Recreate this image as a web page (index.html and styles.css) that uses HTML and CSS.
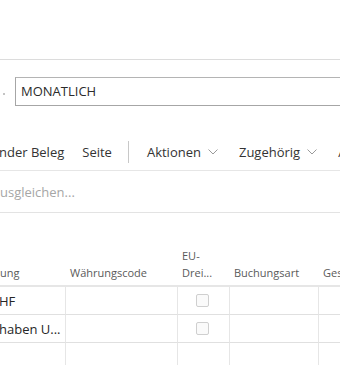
FILE: index.html
```html
<!DOCTYPE html>
<html lang="de">
<head>
<meta charset="utf-8">
<link rel="stylesheet" href="styles.css">
</head>
<body>
<div class="page">
  <div class="topbar"></div>
  <div class="field-row">
    <span class="dot"></span>
    <div class="input">MONATLICH</div>
  </div>
  <div class="toolbar">
    <span class="tb-item first">nder Beleg</span>
    <span class="tb-item">Seite</span>
    <span class="sep"></span>
    <span class="tb-item menu">Aktionen <svg class="chev" viewBox="0 0 10 6"><path d="M0.5 0.5 L5 5 L9.5 0.5" /></svg></span>
    <span class="tb-item menu">Zugehörig <svg class="chev" viewBox="0 0 10 6"><path d="M0.5 0.5 L5 5 L9.5 0.5" /></svg></span>
    <span class="tb-item">A</span>
  </div>
  <div class="search">usgleichen...</div>
  <div class="grid">
    <div class="hd c1">ung</div>
    <div class="hd c2">Währungscode</div>
    <div class="hd c3">EU-<br>Drei...</div>
    <div class="hd c4">Buchungsart</div>
    <div class="hd c5">Ges</div>

    <div class="cell c1 txt">HF</div>
    <div class="cell c2"></div>
    <div class="cell c3"><span class="cb"></span></div>
    <div class="cell c4"></div>
    <div class="cell c5"></div>

    <div class="cell c1 txt">haben U...</div>
    <div class="cell c2"></div>
    <div class="cell c3"><span class="cb"></span></div>
    <div class="cell c4"></div>
    <div class="cell c5"></div>

    <div class="cell c1"></div>
    <div class="cell c2"></div>
    <div class="cell c3"></div>
    <div class="cell c4"></div>
    <div class="cell c5"></div>
  </div>
</div>
</body>
</html>
```
FILE: styles.css
```css
html, body {
  margin: 0;
  padding: 0;
  background: #fff;
}
body {
  width: 340px;
  height: 365px;
  overflow: hidden;
  font-family: "Open Sans", "Liberation Sans", sans-serif;
  color: #212121;
}
.page {
  width: 340px;
  overflow: hidden;
}
.topbar {
  height: 59px;
  border-bottom: 1px solid #dcdcdc;
}
.field-row {
  display: flex;
  align-items: center;
  height: 29px;
  margin-top: 17px;
}
.dot {
  flex: 0 0 2px;
  width: 2px;
  height: 2px;
  background: #c4c4c4;
  margin-left: 3px;
  margin-right: 10px;
  margin-top: 5px;
}
.input {
  flex: 0 0 340px;
  box-sizing: border-box;
  height: 29px;
  border: 1px solid #a6a6a6;
  border-top-color: #b4b4b4;
  padding-left: 5px;
  font-size: 13px;
  line-height: 27px;
  color: #2b2b2b;
  white-space: nowrap;
}
.toolbar {
  display: flex;
  align-items: center;
  height: 34px;
  margin-top: 31px;
  padding-bottom: 3px;
  box-sizing: border-box;
  border-bottom: 1px solid #e6e6e6;
  white-space: nowrap;
  font-size: 13px;
  color: #333;
}
.tb-item {
  flex: 0 0 auto;
  display: flex;
  align-items: center;
  margin-right: 18px;
}
.tb-item.menu {
  margin-right: 21px;
}
.tb-item.first {
  margin-left: -1px;
}
.sep {
  flex: 0 0 1px;
  width: 1px;
  height: 22px;
  background: #c8c8c8;
  margin: 0 18px 0 -2px;
}
.chev {
  flex: 0 0 10px;
  width: 10px;
  height: 6px;
  margin-left: 7px;
  fill: none;
  stroke: #9a9a9a;
  stroke-width: 1;
}
.search {
  height: 42px;
  box-sizing: border-box;
  border-bottom: 1px solid #e3e3e3;
  font-size: 13px;
  color: #a6a6a6;
  line-height: 42px;
  white-space: nowrap;
}
.grid {
  display: grid;
  grid-template-columns: 65px 112px 52px 89px 60px;
  grid-template-rows: 74px 28px 28px 28px;
}
.hd {
  display: flex;
  align-items: flex-end;
  font-size: 11px;
  line-height: 17px;
  color: #5a5a5a;
  padding: 0 0 4px 5px;
  border-bottom: 2px solid #e6e6e6;
  white-space: nowrap;
  overflow: hidden;
}
.hd.c1 {
  padding-left: 0;
}
.cell {
  border-bottom: 1px solid #e0e0e0;
  border-left: 1px solid #e6e6e6;
  display: flex;
  align-items: center;
  font-size: 13px;
  white-space: nowrap;
  overflow: hidden;
}
.cell.c1 {
  border-left: none;
}
.cell.txt {
  margin-left: -1px;
  color: #262626;
}
.cell.c3 {
  justify-content: center;
}
.cb {
  width: 11px;
  height: 11px;
  border: 1px solid #cfcfcf;
  border-radius: 2px;
  background: #fafafa;
  margin-left: -2px;
  margin-top: -1px;
}
```
